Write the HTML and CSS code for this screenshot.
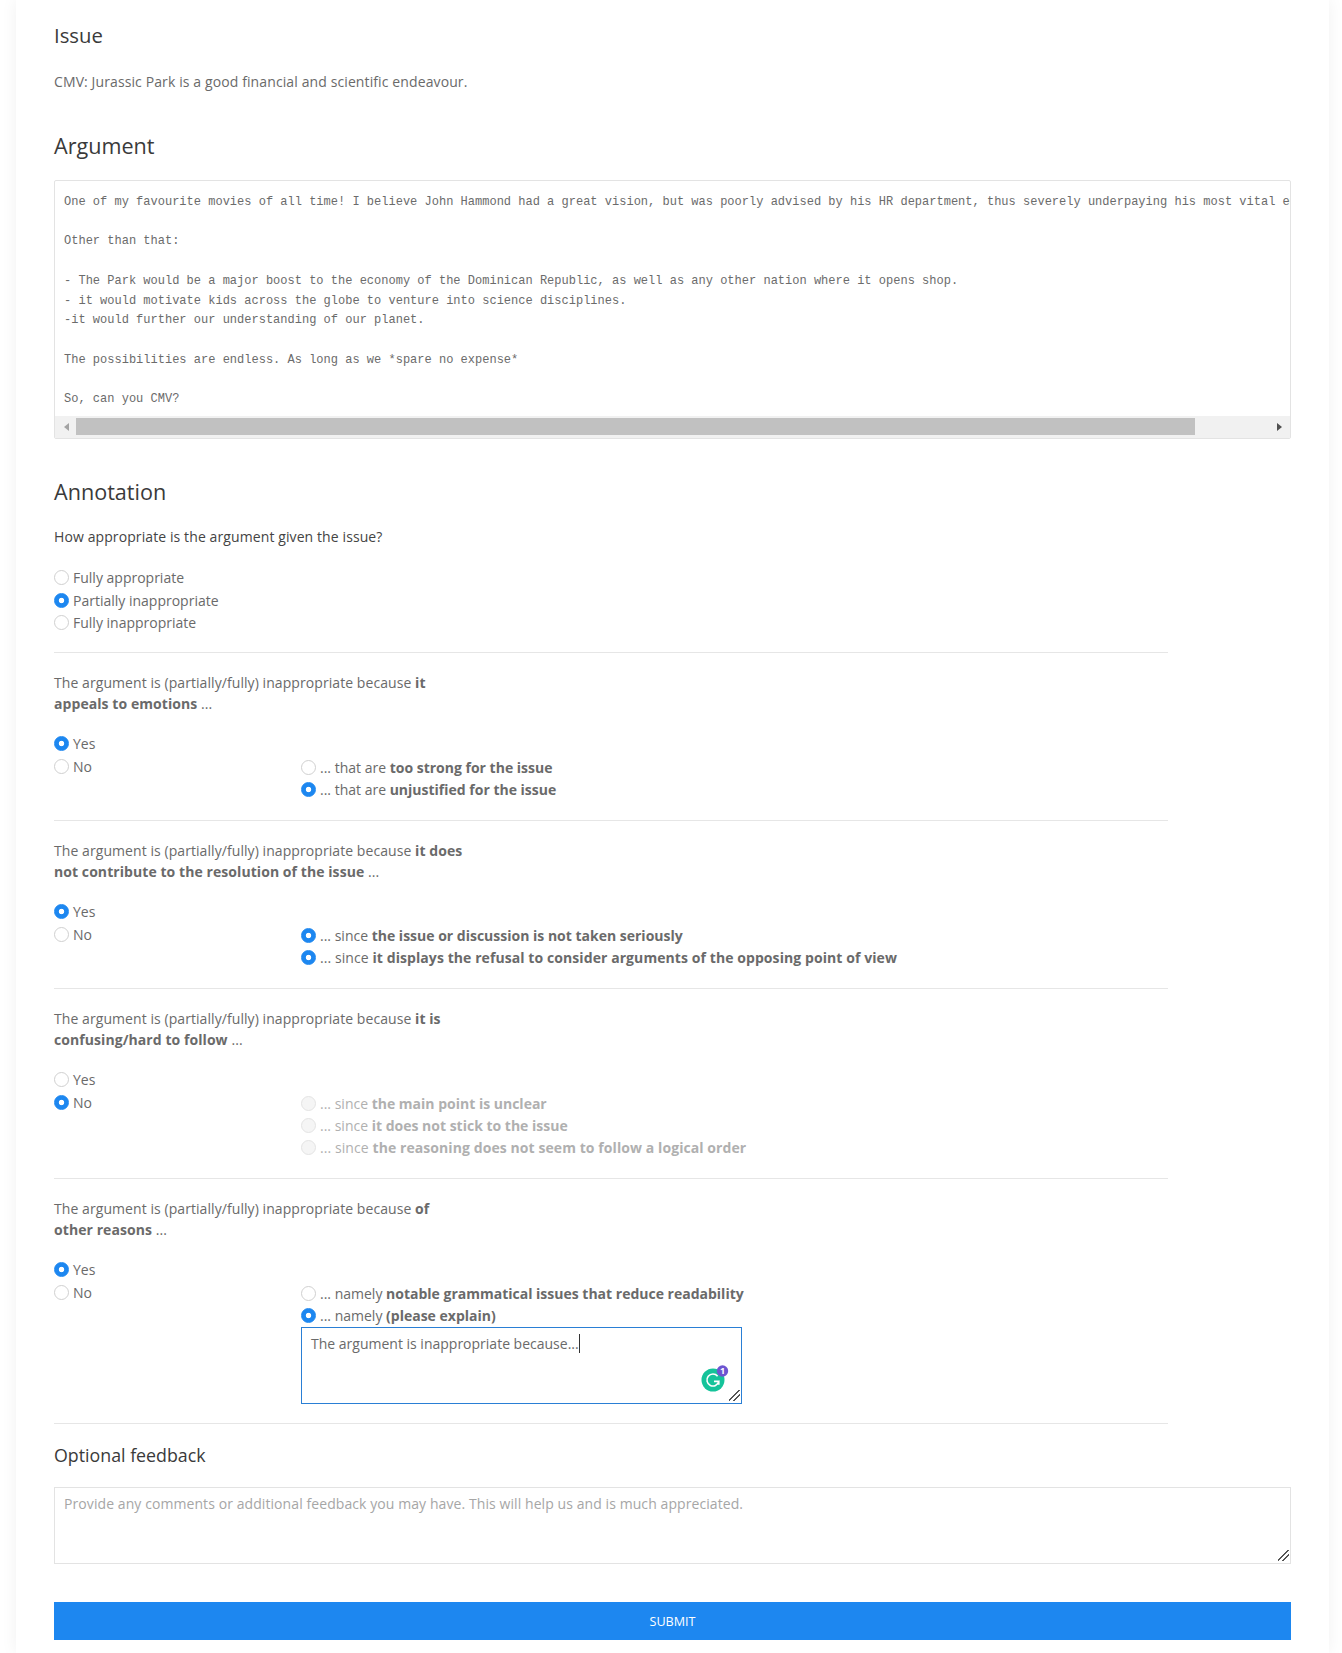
FILE: index.html
```html
<!DOCTYPE html>
<html lang="en">
<head>
<meta charset="utf-8">
<title>Annotation</title>
<link rel="stylesheet" href="styles.css">
</head>
<body>
<main class="card">
  <h2 class="title-small">Issue</h2>
  <p class="issue">CMV: Jurassic Park is a good financial and scientific endeavour.</p>

  <h2 class="title">Argument</h2>
  <div class="code-box">
    <pre class="code">One of my favourite movies of all time! I believe John Hammond had a great vision, but was poorly advised by his HR department, thus severely underpaying his most vital employee.

Other than that:

- The Park would be a major boost to the economy of the Dominican Republic, as well as any other nation where it opens shop.
- it would motivate kids across the globe to venture into science disciplines.
-it would further our understanding of our planet.

The possibilities are endless. As long as we *spare no expense*

So, can you CMV?</pre>
    <div class="scrollbar">
      <span class="arrow arrow-left"></span>
      <span class="thumb"></span>
      <span class="arrow arrow-right"></span>
    </div>
  </div>

  <h2 class="title title-annotation">Annotation</h2>
  <p class="question">How appropriate is the argument given the issue?</p>
  <div class="options">
    <label class="radio"><input type="radio" name="q0"><span>Fully appropriate</span></label>
    <label class="radio"><input type="radio" name="q0" checked><span>Partially inappropriate</span></label>
    <label class="radio"><input type="radio" name="q0"><span>Fully inappropriate</span></label>
  </div>

  <section class="block">
    <p class="reason">The argument is (partially/fully) inappropriate because <b>it<br>appeals to emotions</b> ...</p>
    <div class="answer">
      <div class="yesno">
        <label class="radio"><input type="radio" name="q1" checked><span>Yes</span></label>
        <label class="radio"><input type="radio" name="q1"><span>No</span></label>
      </div>
      <div class="subs">
        <label class="radio"><input type="radio"><span>... that are <b>too strong for the issue</b></span></label>
        <label class="radio"><input type="radio" checked><span>... that are <b>unjustified for the issue</b></span></label>
      </div>
    </div>
  </section>

  <section class="block">
    <p class="reason">The argument is (partially/fully) inappropriate because <b>it does<br>not contribute to the resolution of the issue</b> ...</p>
    <div class="answer">
      <div class="yesno">
        <label class="radio"><input type="radio" name="q2" checked><span>Yes</span></label>
        <label class="radio"><input type="radio" name="q2"><span>No</span></label>
      </div>
      <div class="subs">
        <label class="radio"><input type="radio" checked><span>... since <b>the issue or discussion is not taken seriously</b></span></label>
        <label class="radio radio-long"><input type="radio" checked><span>... since <b>it displays the refusal to consider arguments of the opposing point of view</b></span></label>
      </div>
    </div>
  </section>

  <section class="block">
    <p class="reason">The argument is (partially/fully) inappropriate because <b>it is<br>confusing/hard to follow</b> ...</p>
    <div class="answer">
      <div class="yesno">
        <label class="radio"><input type="radio" name="q3"><span>Yes</span></label>
        <label class="radio"><input type="radio" name="q3" checked><span>No</span></label>
      </div>
      <div class="subs">
        <label class="radio radio-disabled"><input type="radio" disabled><span>... since <b>the main point is unclear</b></span></label>
        <label class="radio radio-disabled"><input type="radio" disabled><span>... since <b>it does not stick to the issue</b></span></label>
        <label class="radio radio-disabled radio-long"><input type="radio" disabled><span>... since <b>the reasoning does not seem to follow a logical order</b></span></label>
      </div>
    </div>
  </section>

  <section class="block block-end">
    <p class="reason">The argument is (partially/fully) inappropriate because <b>of<br>other reasons</b> ...</p>
    <div class="answer">
      <div class="yesno">
        <label class="radio"><input type="radio" name="q4" checked><span>Yes</span></label>
        <label class="radio"><input type="radio" name="q4"><span>No</span></label>
      </div>
      <div class="subs">
        <label class="radio"><input type="radio"><span>... namely <b>notable grammatical issues that reduce readability</b></span></label>
        <label class="radio"><input type="radio" checked><span>... namely <b>(please explain)</b></span></label>
        <div class="explain">
          <div class="textbox textbox-focus">The argument is inappropriate because...<span class="caret"></span></div>
          <svg class="grammarly" width="28" height="28" viewBox="0 0 28 28" aria-hidden="true">
            <circle cx="12" cy="15" r="11.5" fill="#15c39a"/>
            <path d="M16.6 11.2A6 6 0 1 0 17.8 16.4H13M17.8 16.4l0 3.4" fill="none" stroke="#fff" stroke-width="1.6"/>
            <circle cx="21.5" cy="6" r="5.7" fill="#6d55d1"/>
            <text x="21.5" y="9" class="grammarly-count">1</text>
          </svg>
        </div>
      </div>
    </div>
  </section>

  <section class="feedback">
    <h2 class="title-feedback">Optional feedback</h2>
    <textarea class="textbox textbox-wide" placeholder="Provide any comments or additional feedback you may have. This will help us and is much appreciated."></textarea>
  </section>

  <button class="submit" type="button">SUBMIT</button>
</main>
</body>
</html>
```

FILE: styles.css
```css
* { box-sizing: border-box; }

html, body { margin: 0; background: #fff; }

body {
  font-family: "Open Sans", "Noto Sans", sans-serif;
  font-size: 14px;
  line-height: 21px;
  color: #6a6a6a;
  padding: 0 13px 0 16px;
  overflow: hidden;
}

.card {
  background: #fff;
  height: 1653px;
  padding: 21px 38px 0;
  box-shadow: 0 0 16px rgba(0, 0, 0, 0.06);
}

.title-small,
.title,
.title-feedback {
  margin: 0;
  font-weight: 400;
  color: #3a3a3a;
}

.title-small { font-size: 20.3px; line-height: 28px; }
.title { font-size: 21.6px; line-height: 30px; margin-top: 39px; }
.title-annotation { margin-top: 38px; }
.title-feedback { font-size: 17.8px; line-height: 28px; margin-bottom: 18px; }

.issue { margin: 22px 0 0; letter-spacing: 0.11px; }

.code-box {
  margin-top: 19px;
  border: 1px solid #e3e3e3;
  border-radius: 2px;
  overflow: hidden;
}

.code {
  margin: 0;
  padding: 12px 9px 0;
  height: 235px;
  overflow: hidden;
  font-family: "Liberation Mono", monospace;
  font-size: 12.03px;
  line-height: 19.7px;
  color: #6b6b6b;
}

.scrollbar {
  display: flex;
  align-items: center;
  height: 22px;
  padding: 0 0 1px;
  background: #f1f1f1;
}

.thumb {
  flex: 0 0 1119px;
  height: 17px;
  background: #c1c1c1;
}

.arrow {
  width: 0;
  height: 0;
  border-top: 4px solid transparent;
  border-bottom: 4px solid transparent;
}

.arrow-left {
  margin: 0 7px 0 9px;
  border-right: 5px solid #a3a3a3;
}

.arrow-right {
  margin-left: 82px;
  border-left: 5px solid #505050;
}

.question { margin: 19px 0 0; color: #444; letter-spacing: 0.1px; }

.options { margin-top: 19px; padding-bottom: 18px; }

.radio {
  display: flex;
  align-items: center;
  height: 22.7px;
  white-space: nowrap;
}

.subs .radio { height: 22.4px; }

.radio-long { letter-spacing: 0.08px; }

.radio input {
  appearance: none;
  flex: none;
  width: 15px;
  height: 15px;
  margin: 0 4px 0 0;
  border: 1px solid #d0d0d0;
  border-radius: 50%;
  background: #fff;
}

.radio input:checked {
  border-color: #1d87f0;
  background: radial-gradient(circle, #fff 0 2.3px, #1d87f0 3.1px);
}

.radio input:disabled {
  background: #f5f5f5;
  border-color: #e4e4e4;
}

.radio-disabled { color: #b0b0b0; }

.block {
  border-top: 1px solid #e6e6e6;
  width: 1114px;
  padding: 19px 0 19.2px;
}

.block-end { border-bottom: 1px solid #e6e6e6; }

.reason { margin: 0; letter-spacing: 0.07px; }

.reason b,
.radio b { font-weight: 700; }

.answer {
  display: flex;
  margin-top: 18px;
}

.yesno { flex: 0 0 247px; }

.subs {
  margin-top: 24px;
  width: 441px;
}

.explain { position: relative; }

.textbox {
  display: block;
  width: 100%;
  padding: 5px 9px;
  border: 1px solid #e3e3e3;
  background: #fff;
  font: inherit;
  color: inherit;
  overflow: auto;
  resize: vertical;
}

.textbox::-webkit-resizer {
  background: linear-gradient(135deg, transparent 45%, #555 45% 54%, transparent 54% 68%, #555 68% 77%, transparent 77%) 3px 2px / 11px 11px no-repeat;
}

.textbox-focus {
  height: 77px;
  border-color: #2a7fd5;
}

.caret {
  display: inline-block;
  width: 1px;
  height: 19px;
  background: #333;
  vertical-align: text-bottom;
}

.grammarly {
  position: absolute;
  right: 13px;
  bottom: 11px;
}

.grammarly-count {
  font-size: 9px;
  font-weight: 700;
  fill: #fff;
  text-anchor: middle;
}

.feedback { padding-top: 17px; }
.textbox-wide { height: 77px; }
.textbox-wide::placeholder { color: #a6a6a6; opacity: 1; letter-spacing: 0.08px; }

.submit {
  display: block;
  width: 100%;
  height: 38px;
  margin-top: 38px;
  border: 0;
  background: #1d87f0;
  color: #fff;
  font: inherit;
  font-size: 12.6px;
}
```
